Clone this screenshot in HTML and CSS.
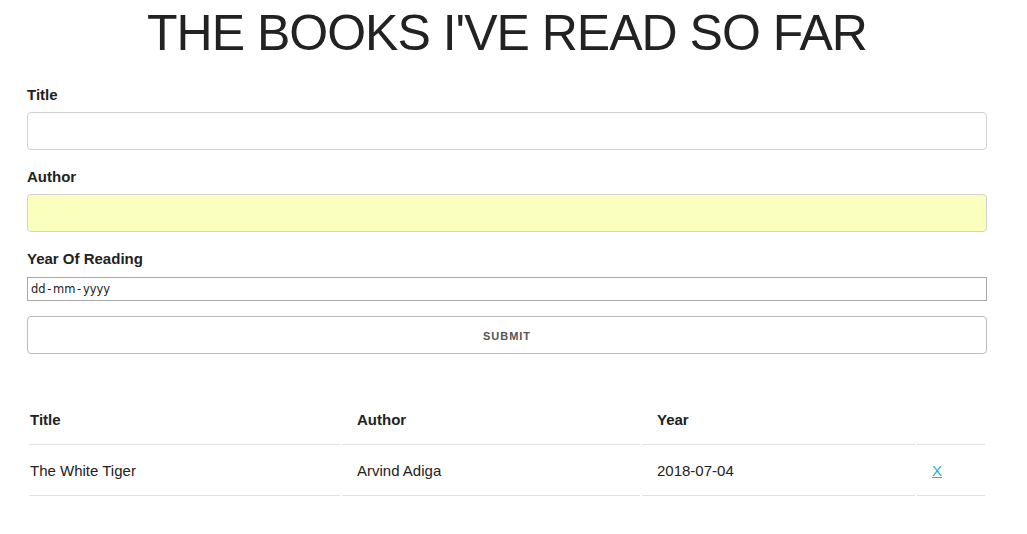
FILE: index.html
```html
<!DOCTYPE html>
<html lang="en">
<head>
<meta charset="utf-8">
<title>Books</title>
<link rel="stylesheet" href="styles.css">
</head>
<body>
<div class="container">
  <h1 class="page-title">THE BOOKS I'VE READ SO FAR</h1>
  <form class="book-form">
    <label class="field-label" for="title">Title</label>
    <input class="text-input" id="title" type="text">
    <label class="field-label" for="author">Author</label>
    <input class="text-input autofilled" id="author" type="text">
    <label class="field-label" for="year">Year Of Reading</label>
    <input class="date-input" id="year" type="text" placeholder="dd - mm - yyyy">
    <button class="submit-btn" type="button">Submit</button>
  </form>
  <table class="books-table">
    <thead>
      <tr>
        <th class="col-title">Title</th>
        <th class="col-author">Author</th>
        <th class="col-year">Year</th>
        <th class="col-del"></th>
      </tr>
    </thead>
    <tbody>
      <tr>
        <td>The White Tiger</td>
        <td>Arvind Adiga</td>
        <td>2018-07-04</td>
        <td><a class="del-link" href="#">X</a></td>
      </tr>
    </tbody>
  </table>
</div>
</body>
</html>
```
FILE: styles.css
```css
* { box-sizing: border-box; }
html, body { margin: 0; padding: 0; background: #fff; }
body {
  font-family: "Liberation Sans", Arial, sans-serif;
  font-size: 15px;
  line-height: 1.6;
  color: #222;
}
.container {
  width: 960px;
  margin-left: 27px;
}
.page-title {
  font-size: 50px;
  font-weight: 400;
  line-height: 1.2;
  letter-spacing: -1px;
  text-align: center;
  margin: 3px 0 20px;
}
.book-form {
  display: flex;
  flex-direction: column;
}
.field-label {
  display: block;
  font-weight: 700;
  margin-bottom: 5px;
}
.text-input {
  height: 38px;
  padding: 6px 10px;
  background: #fff;
  border: 1px solid #D1D1D1;
  border-radius: 4px;
  box-shadow: none;
  margin: 0 0 15px;
  font: inherit;
  width: 100%;
}
.text-input.autofilled { background: #FAFFBD; }
.date-input {
  height: 24px;
  width: 100%;
  border: 1px solid #a9a9a9;
  border-radius: 0;
  padding: 1px 3px;
  margin: 1px 0 15px;
  font-family: "DejaVu Sans", Verdana, sans-serif;
  font-size: 11.5px;
  word-spacing: -2px;
}
.date-input::placeholder { color: #222; opacity: 1; }
.submit-btn {
  height: 38px;
  width: 100%;
  padding: 0 30px;
  background: transparent;
  border: 1px solid #bbb;
  border-radius: 4px;
  color: #555;
  font-family: "Liberation Sans", Arial, sans-serif;
  font-size: 11px;
  font-weight: 700;
  letter-spacing: 1px;
  text-transform: uppercase;
  line-height: 38px;
  margin: 0;
}
.books-table {
  width: 960px;
  table-layout: fixed;
  border-collapse: separate;
  border-spacing: 2px;
  margin-top: 40px;
}
.books-table th, .books-table td {
  text-align: left;
  padding: 12px 15px;
  border-bottom: 1px solid #E1E1E1;
  line-height: 24px;
  font-size: 15px;
}
.books-table th { font-weight: 700; }
.books-table th:first-child, .books-table td:first-child { padding-left: 1px; }
.books-table th:last-child, .books-table td:last-child { padding-right: 0; }
.col-title { width: 311px; }
.col-author { width: 298px; }
.col-year { width: 273px; }
.col-del { width: 68px; }
.del-link { color: #1EAEDB; text-decoration: underline; }
```
